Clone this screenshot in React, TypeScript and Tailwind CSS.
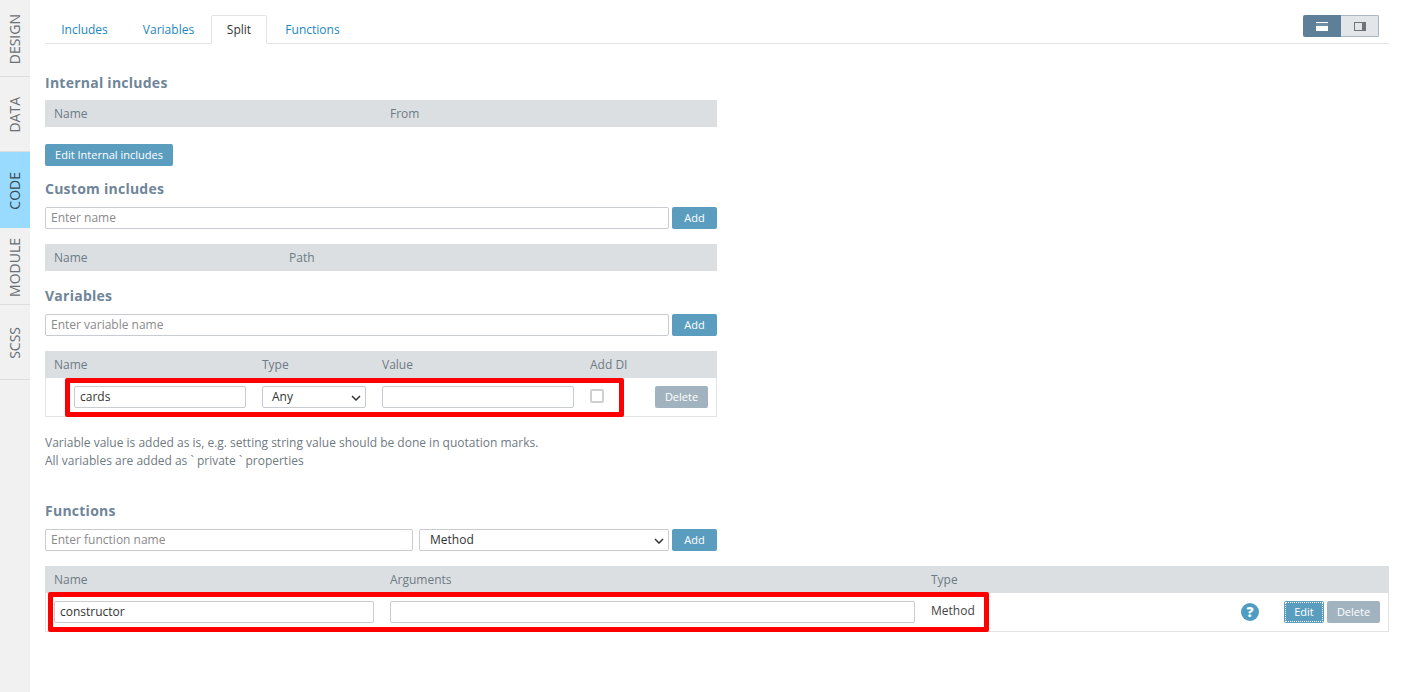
import React from "react";

const F = "font-['Open_Sans',sans-serif]";
const inputCls = "h-[22px] border border-[#c8ccd0] rounded-[2px] bg-white pl-[5px] pr-[5px] pb-[2px] text-[12px] text-[#333] outline-none placeholder:text-[#8a8a8a]";

function Heading({ children, className = "" }: { children: React.ReactNode; className?: string }) {
  return <h3 className={`h-[18px] leading-[18px] text-[14px] font-bold tracking-[0.25px] text-[#6f8599] ${className}`}>{children}</h3>;
}

function Btn({ children, className = "" }: { children: React.ReactNode; className?: string }) {
  return (
    <button className={`h-[22px] rounded-[2px] bg-[#5b9dbf] text-white text-[11px] leading-[22px] text-center shrink-0 ${className}`}>
      {children}
    </button>
  );
}

function Head({ children, className = "" }: { children: React.ReactNode; className?: string }) {
  return <div className={`h-[27px] bg-[#dcdfe1] flex items-center text-[12px] text-[#6d7b85] ${className}`}>{children}</div>;
}

function Chevron() {
  return (
    <svg width="10" height="6" viewBox="0 0 10 6" className="absolute right-[4px] top-[8px] pointer-events-none">
      <path d="M1 1l4 4 4-4" fill="none" stroke="#333" strokeWidth="1.5" />
    </svg>
  );
}

function FakeSelect({ value, className = "", pad = "pl-[10px]" }: { value: string; className?: string; pad?: string }) {
  return (
    <div className={`relative h-[22px] border border-[#c8ccd0] rounded-[2px] bg-white ${pad} text-[12px] leading-[20px] text-[#333] ${className}`}>
      {value}
      <Chevron />
    </div>
  );
}

const sideTabs = [
  { t: "DESIGN", h: "h-[77px]", active: false },
  { t: "DATA", h: "h-[75px]", active: false },
  { t: "CODE", h: "h-[76px]", active: true },
  { t: "MODULE", h: "h-[77px]", active: false },
  { t: "SCSS", h: "h-[75px]", active: false },
];

export default function App() {
  return (
    <div className={`${F} flex h-[692px] w-[1403px] overflow-hidden bg-white`}>
      <aside className="w-[30px] shrink-0 bg-[#f1f1f1]">
        {sideTabs.map((s) => (
          <div
            key={s.t}
            className={`${s.h} flex items-center justify-center pr-[1px] pt-[2px] ${s.active ? "bg-[#99dbff]" : "border-b border-[#dcdcdc]"}`}
          >
            <span className={`[writing-mode:vertical-rl] rotate-180 text-[14px] ${s.active ? "text-[#3b4a52]" : "text-[#6a6f73]"}`}>{s.t}</span>
          </div>
        ))}
      </aside>

      <main className="flex-1 pl-[15px] pr-[14px]">
        <div className="h-[44px] pt-[15px] border-b border-[#e3e3e3] flex items-end justify-between">
          <div className="flex text-[12px] text-[#1b87bd] h-[29px]">
            <span className="w-[81px] text-center leading-[31px] pr-[2px]">Includes</span>
            <span className="w-[85px] text-center leading-[31px]">Variables</span>
            <span className="w-[56px] h-[29px] text-center leading-[27px] border border-b-white border-[#e3e3e3] rounded-t-[2px] text-[#333] bg-white relative top-[1px]">Split</span>
            <span className="w-[91px] text-center leading-[31px]">Functions</span>
          </div>
          <div className="flex h-[22px] w-[76px] mr-[10px] mb-[6px] rounded-[2px] overflow-hidden self-start mt-0 relative">
            <div className="w-[38px] bg-[#5e7f98] flex items-center justify-center">
              <svg width="12" height="9" viewBox="0 0 12 9"><rect width="12" height="9" fill="#fff" /><rect x="0" y="1" width="12" height="3" fill="#6f8da3" /></svg>
            </div>
            <div className="w-[38px] bg-[#e3e6e8] border border-l-0 border-[#a9b7c2] flex items-center justify-center">
              <svg width="12" height="9" viewBox="0 0 12 9"><rect width="12" height="9" fill="#6f7478" /><rect x="1" y="1" width="7" height="7" fill="#e3e6e8" /></svg>
            </div>
          </div>
        </div>

        <div className="w-[672px]">
          <Heading className="mt-[30px]">Internal includes</Heading>
          <Head className="mt-[8px] pl-[9px]">
            <span className="w-[336px]">Name</span>
            <span>From</span>
          </Head>
          <Btn className="mt-[17px] w-[128px] block">Edit Internal includes</Btn>

          <Heading className="mt-[14px]">Custom includes</Heading>
          <div className="mt-[9px] flex justify-between">
            <input className={`${inputCls} w-[624px]`} placeholder="Enter name" />
            <Btn className="w-[45px]">Add</Btn>
          </div>
          <Head className="mt-[15px] pl-[9px]">
            <span className="w-[235px]">Name</span>
            <span>Path</span>
          </Head>

          <Heading className="mt-[16px]">Variables</Heading>
          <div className="mt-[9px] flex justify-between">
            <input className={`${inputCls} w-[624px]`} placeholder="Enter variable name" />
            <Btn className="w-[45px]">Add</Btn>
          </div>
          <Head className="mt-[15px] pl-[9px]">
            <span className="w-[208px]">Name</span>
            <span className="w-[120px]">Type</span>
            <span className="w-[208px]">Value</span>
            <span>Add DI</span>
          </Head>
          <div className="relative h-[39px] border border-t-0 border-[#e3e3e3] flex items-center pl-[28px]">
            <input className={`${inputCls} w-[172px]`} defaultValue="cards" />
            <FakeSelect value="Any" className="ml-[16px] w-[104px]" pad="pl-[9px]" />
            <input className={`${inputCls} ml-[16px] w-[192px]`} />
            <div className="ml-[16px] w-[14px] h-[14px] border-2 border-[#cfcfcf] rounded-[2px] bg-white mb-[2px]" />
            <Btn className="ml-[51px] w-[53px] !bg-[#a2b3c0]">Delete</Btn>
            <div className="absolute left-[19px] top-0 w-[559px] h-[39px] border-[5px] border-[#ff0000] rounded-[2px] pointer-events-none" />
          </div>

          <p className="mt-[17px] text-[12px] leading-[18px] text-[#6f7a82]">
            Variable value is added as is, e.g. setting string value should be done in quotation marks.
            <br />
            All variables are added as ` private ` properties
          </p>

          <Heading className="mt-[32px]">Functions</Heading>
          <div className="mt-[9px] flex">
            <input className={`${inputCls} w-[368px]`} placeholder="Enter function name" />
            <FakeSelect value="Method" className="ml-[6px] w-[250px]" />
            <Btn className="ml-[3px] w-[45px]">Add</Btn>
          </div>
        </div>

        <Head className="mt-[15px] pl-[9px]">
          <span className="w-[336px]">Name</span>
          <span className="w-[541px]">Arguments</span>
          <span>Type</span>
        </Head>
        <div className="relative h-[39px] border border-t-0 border-[#e3e3e3] flex items-center pl-[8px]">
          <input className={`${inputCls} w-[320px]`} defaultValue="constructor" />
          <input className={`${inputCls} ml-[16px] w-[525px]`} />
          <span className="ml-[16px] w-[44px] text-[12px] text-[#444] mb-[3px] whitespace-nowrap">Method</span>
          <svg width="18" height="18" viewBox="0 0 18 18" className="ml-[266px]">
            <circle cx="9" cy="9" r="9" fill="#4f9cc4" />
            <text x="9" y="14" textAnchor="middle" fontSize="14" fontWeight="800" fill="#fff" fontFamily="Open Sans, sans-serif">?</text>
          </svg>
          <Btn className="ml-[25px] w-[40px] outline-1 outline-dotted outline-white -outline-offset-2">Edit</Btn>
          <Btn className="ml-[3px] w-[53px] !bg-[#a2b3c0]">Delete</Btn>
          <div className="absolute left-[2px] top-[-1px] w-[941px] h-[40px] border-[5px] border-[#ff0000] rounded-[2px] pointer-events-none" />
        </div>
      </main>
    </div>
  );
}
